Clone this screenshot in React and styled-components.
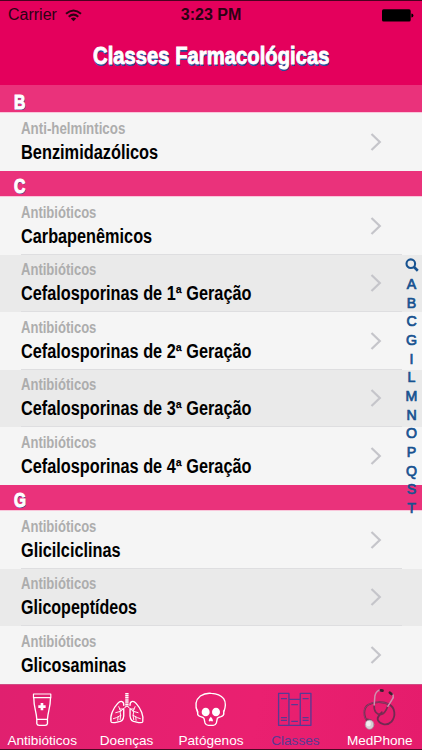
import React, { useLayoutEffect, useRef, useState } from 'react';
import styled, { createGlobalStyle } from 'styled-components';

const GlobalStyle = createGlobalStyle`
  * { box-sizing: border-box; }
  body {
    margin: 0;
    overflow: hidden;
    background: #f5f5f5;
    font-family: "Liberation Sans", Arial, sans-serif;
  }
`;

const Screen = styled.div`
  position: relative;
  width: 422px;
  height: 750px;
  display: flex;
  flex-direction: column;
  overflow: hidden;
`;

const Header = styled.header`
  height: 85px;
  flex: none;
  background: #e4005c;
  border-top: 1px solid #4a0120;
`;

const StatusBar = styled.div`
  height: 28px;
  display: grid;
  grid-template-columns: 1fr auto 1fr;
  align-items: center;
  padding: 0 8px;
  font-size: 16px;
  line-height: 28px;
  color: #2b0213;
`;

const Carrier = styled.div`
  display: flex;
  align-items: center;
  gap: 8px;
`;

const Clock = styled.div`
  font-weight: 700;
`;

const BatterySlot = styled.div`
  display: flex;
  justify-content: flex-end;
`;

const TitleBar = styled.div`
  display: flex;
  justify-content: center;
  height: 54px;
  font-size: 23px;
  line-height: 54px;
  font-weight: 700;
  color: #fff;
  -webkit-text-stroke: 0.8px #fff;
  text-shadow: 0.4px 1.5px 0 #24509a;
`;

const FitBox = styled.span`
  display: block;
  width: ${(p) => p.$width}px;
  white-space: nowrap;
`;

const FitInner = styled.span`
  display: inline-block;
  transform-origin: 0 50%;
`;

const List = styled.main`
  flex: 1;
  min-height: 0;
  overflow: hidden;
`;

const SectionHeader = styled.div`
  height: ${(p) => p.$height}px;
  padding: ${(p) => p.$height - 25.5}px 0 0 14px;
  background: #ea327b;
  border-bottom: 1px solid #f9c6da;
  color: #fff;
  font-size: 20.5px;
  line-height: 28px;
  font-weight: 700;
  -webkit-text-stroke: 1.1px #fff;
  text-shadow: 0.5px 1.4px 0 #24509a;
`;

const Row = styled.div`
  height: 57.5px;
  display: flex;
  align-items: flex-start;
  justify-content: space-between;
  padding: 0 40px 0 21px;
  background: ${(p) => (p.$shaded ? '#eaeaea' : '#f5f5f5')};
`;

const RowText = styled.div`
  padding-top: 5.5px;
`;

const Category = styled.div`
  height: 20px;
  font-size: 16px;
  line-height: 20px;
  font-weight: 700;
  color: #adadad;
`;

const Name = styled.div`
  height: 26px;
  font-size: 19.5px;
  line-height: 26px;
  font-weight: 700;
  color: #000;
`;

const Chevron = styled.svg`
  flex: none;
  margin-top: 18.5px;
`;

const Divider = styled.div`
  height: 1px;
  margin: -1px 20px 0 21px;
  background: #dedee0;
`;

const IndexBar = styled.nav`
  position: absolute;
  top: 256px;
  right: 0;
  width: 21px;
  display: flex;
  flex-direction: column;
  align-items: center;
  color: #175290;
`;

const IndexLetter = styled.span`
  height: 18.68px;
  font-size: 14.2px;
  line-height: 19px;
  -webkit-text-stroke: 0.7px #175290;
`;

const TabBar = styled.footer`
  height: 66px;
  flex: none;
  display: grid;
  grid-template-columns: repeat(5, 1fr);
  background: linear-gradient(100deg, #e0206f, #ea2070 60%, #e51c6c);
  border-top: 1px solid #cf4c83;
  border-bottom: 1.5px solid #4a0924;
`;

const Tab = styled.div`
  display: flex;
  flex-direction: column;
  align-items: center;
  color: ${(p) => (p.$active ? '#583a93' : '#fff')};
  font-size: 13.6px;
  line-height: 18px;
  white-space: nowrap;
`;

const TabIcon = styled.svg`
  width: 60px;
  height: 48px;
  margin-top: -1px;
  flex: none;
  fill: none;
  stroke: currentColor;
  stroke-width: 4;
  stroke-linejoin: round;
  stroke-linecap: round;
`;

function FitText({ width, children }) {
  const ref = useRef(null);
  const [scale, setScale] = useState(1);
  useLayoutEffect(() => {
    setScale(width / ref.current.offsetWidth);
  }, [width, children]);
  return (
    <FitBox $width={width}>
      <FitInner ref={ref} style={{ transform: `scaleX(${scale})` }}>{children}</FitInner>
    </FitBox>
  );
}

const WifiIcon = () => (
  <svg width="17" height="13" viewBox="0 0 17 13" fill="none" stroke="#2b0213" strokeWidth="2">
    <path d="M1 4.8Q8.5-1.8 16 4.8" />
    <path d="M3.7 7.7Q8.5 3.5 13.3 7.7" />
    <path d="M8.5 12.2L5.8 9.4Q8.5 7.4 11.2 9.4Z" fill="#2b0213" stroke="none" />
  </svg>
);

const BatteryIcon = () => (
  <svg width="32" height="13" viewBox="0 0 32 13" fill="#000">
    <rect x="0" y="0.3" width="28.7" height="12.2" rx="1.6" />
    <path d="M29.4 4.4Q31.4 4.6 31.4 6.4Q31.4 8.2 29.4 8.4Z" />
  </svg>
);

const SearchIcon = () => (
  <svg width="14" height="19" viewBox="0 0 14 19" fill="none" stroke="#175290">
    <circle cx="5.8" cy="7.7" r="4.3" strokeWidth="2.1" />
    <path d="M9 11L12.8 14.7" strokeWidth="2.6" />
  </svg>
);

const TubeIcon = () => (
  <TabIcon viewBox="36.6 12 180 144">
    <path d="M101 42H153V53H101Z" strokeWidth="3.5" />
    <path d="M102 54C102 84 110 94 111 118H143C144 94 152 84 152 54" />
    <path d="M111 119V131Q112 136 118 136H136Q142 136 143 131V119" />
    <path d="M126.500 69V91M115.500 80H137.500" strokeWidth="8" strokeLinecap="butt" />
  </TabIcon>
);

const LungsIcon = () => (
  <TabIcon viewBox="34.8 12 180 144">
    <path d="M124.500 39V80" strokeWidth="10" strokeLinecap="butt" strokeDasharray="4 1.5" />
    <path d="M115 76C116 64 106 60 97 70C83 85 73 108 77 125C80 132 93 126 105 124C114 121 116 111 115 99V88" strokeWidth="4" />
    <path d="M134 76C133 64 143 60 152 70C166 85 176 108 172 125C169 132 156 126 144 124C135 121 133 111 134 99V88" strokeWidth="4" />
    <path d="M122 80L105 94L91 98M106 94L100 80M104 95L106 106L93 113L84 116M106 106L104 119M98 111L97 121M114 87L103 87" strokeWidth="2.8" />
    <path d="M127 80L144 94L158 98M143 94L149 80M145 95L143 106L156 113L165 116M143 106L145 119M151 111L152 121M135 87L146 87" strokeWidth="2.8" />
  </TabIcon>
);

const SkullIcon = () => (
  <TabIcon viewBox="48 12 180 144">
    <path d="M98 98C90 79 91 60 106 48Q121 38 139 40Q164 41 176 56Q186 71 176 98Q178 107 168 110Q160 112 157 115L154 129Q151 136 145 136H130Q123 136 120 129L117 115Q115 112 107 110Q96 107 98 98Z" />
    <path d="M96 88Q101 92 98 102M178 88Q173 92 176 102" strokeWidth="3" />
    <ellipse cx="122" cy="96" rx="12" ry="13" fill="currentColor" stroke="none" />
    <ellipse cx="153" cy="96" rx="12" ry="13" fill="currentColor" stroke="none" />
    <path d="M137.500 110Q130 118 131 123Q135 126 137.500 122Q141 126 144 123Q145 118 137.500 110Z" fill="currentColor" stroke="none" />
  </TabIcon>
);

const BooksIcon = () => (
  <TabIcon viewBox="46.2 12 180 144">
    <path d="M87 40H118V136H87ZM118 58H152V136H118ZM152 40H184V136H152Z" />
    <path d="M94 56H112M94 113H112M94 121H112M125 74H145M125 124H145M159 56H177M159 113H177M159 121H177" strokeWidth="3.5" strokeLinecap="butt" />
  </TabIcon>
);

const StethoscopeIcon = () => (
  <TabIcon viewBox="53.4 12 180 144">
    <path d="M109 127C92 110 93 84 108 74C125 64 153 63 172 74C188 83 192 108 178 125C165 139 144 133 138 122C131 110 144 105 149 97" stroke="#722951" strokeWidth="5.500" />
    <path d="M107 126C90 109 92 85 108 74C125 64 151 63 169 73" stroke="#b54c7c" strokeWidth="1.500" />
    <path d="M126 75C124 94 134 104 147 103C156 102 162 92 167 78" stroke="#762d52" strokeWidth="5" />
    <path d="M149 32C137 28 130 37 128 48L126 75M174 39C184 41 186 50 180 58L167 79" stroke="#cf8fae" strokeWidth="4.500" />
    <path d="M146 31L151 32M173 38L178 42" stroke="#39202f" strokeWidth="8" />
    <path d="M105 119L115 121" stroke="#773250" strokeWidth="7" />
    <ellipse cx="112" cy="134" rx="13" ry="14" fill="#d4ced3" stroke="#a5919d" strokeWidth="2" />
    <ellipse cx="109" cy="131" rx="7" ry="8" fill="#f1edf0" stroke="none" />
  </TabIcon>
);

const sections = [
  { letter: 'B', height: 28, letterWidth: 11.5, rows: [['Anti-helmínticos', 104, 'Benzimidazólicos', 137.5]] },
  {
    letter: 'C',
    height: 26.5,
    letterWidth: 11.5,
    rows: [
      ['Antibióticos', 75, 'Carbapenêmicos', 131],
      ['Antibióticos', 75, 'Cefalosporinas de 1ª Geração', 230.5],
      ['Antibióticos', 75, 'Cefalosporinas de 2ª Geração', 230.5],
      ['Antibióticos', 75, 'Cefalosporinas de 3ª Geração', 230.5],
      ['Antibióticos', 75, 'Cefalosporinas de 4ª Geração', 230.5],
    ],
  },
  {
    letter: 'G',
    height: 26.5,
    letterWidth: 12,
    rows: [
      ['Antibióticos', 75, 'Glicilciclinas', 99.5],
      ['Antibióticos', 75, 'Glicopeptídeos', 116],
      ['Antibióticos', 75, 'Glicosaminas', 105.5],
    ],
  },
];

const tabs = [
  ['Antibióticos', TubeIcon],
  ['Doenças', LungsIcon],
  ['Patógenos', SkullIcon],
  ['Classes', BooksIcon],
  ['MedPhone', StethoscopeIcon],
];

export default function App() {
  return (
    <>
      <GlobalStyle />
      <Screen>
        <Header>
          <StatusBar>
            <Carrier>Carrier<WifiIcon /></Carrier>
            <Clock>3:23 PM</Clock>
            <BatterySlot><BatteryIcon /></BatterySlot>
          </StatusBar>
          <TitleBar><FitText width={236}>Classes Farmacológicas</FitText></TitleBar>
        </Header>
        <List>
          {sections.map((s) => (
            <React.Fragment key={s.letter}>
              <SectionHeader $height={s.height}>
                <FitText width={s.letterWidth}>{s.letter}</FitText>
              </SectionHeader>
              {s.rows.map(([category, cw, name, nw], i) => (
                <React.Fragment key={name}>
                  <Row $shaded={i % 2 === 1}>
                    <RowText>
                      <Category><FitText width={cw}>{category}</FitText></Category>
                      <Name><FitText width={nw}>{name}</FitText></Name>
                    </RowText>
                    <Chevron width="12" height="20" viewBox="0 0 12 20" fill="none" stroke="#c5c5ca" strokeWidth="2.2">
                      <path d="M1.500 2L9.800 10L1.500 18" />
                    </Chevron>
                  </Row>
                  {i < s.rows.length - 1 && <Divider />}
                </React.Fragment>
              ))}
            </React.Fragment>
          ))}
        </List>
        <TabBar>
          {tabs.map(([label, Icon]) => (
            <Tab key={label} $active={label === 'Classes'}>
              <Icon />
              {label}
            </Tab>
          ))}
        </TabBar>
        <IndexBar>
          <SearchIcon />
          {[...'ABCGILMNOPQST'].map((l) => <IndexLetter key={l}>{l}</IndexLetter>)}
        </IndexBar>
      </Screen>
    </>
  );
}
